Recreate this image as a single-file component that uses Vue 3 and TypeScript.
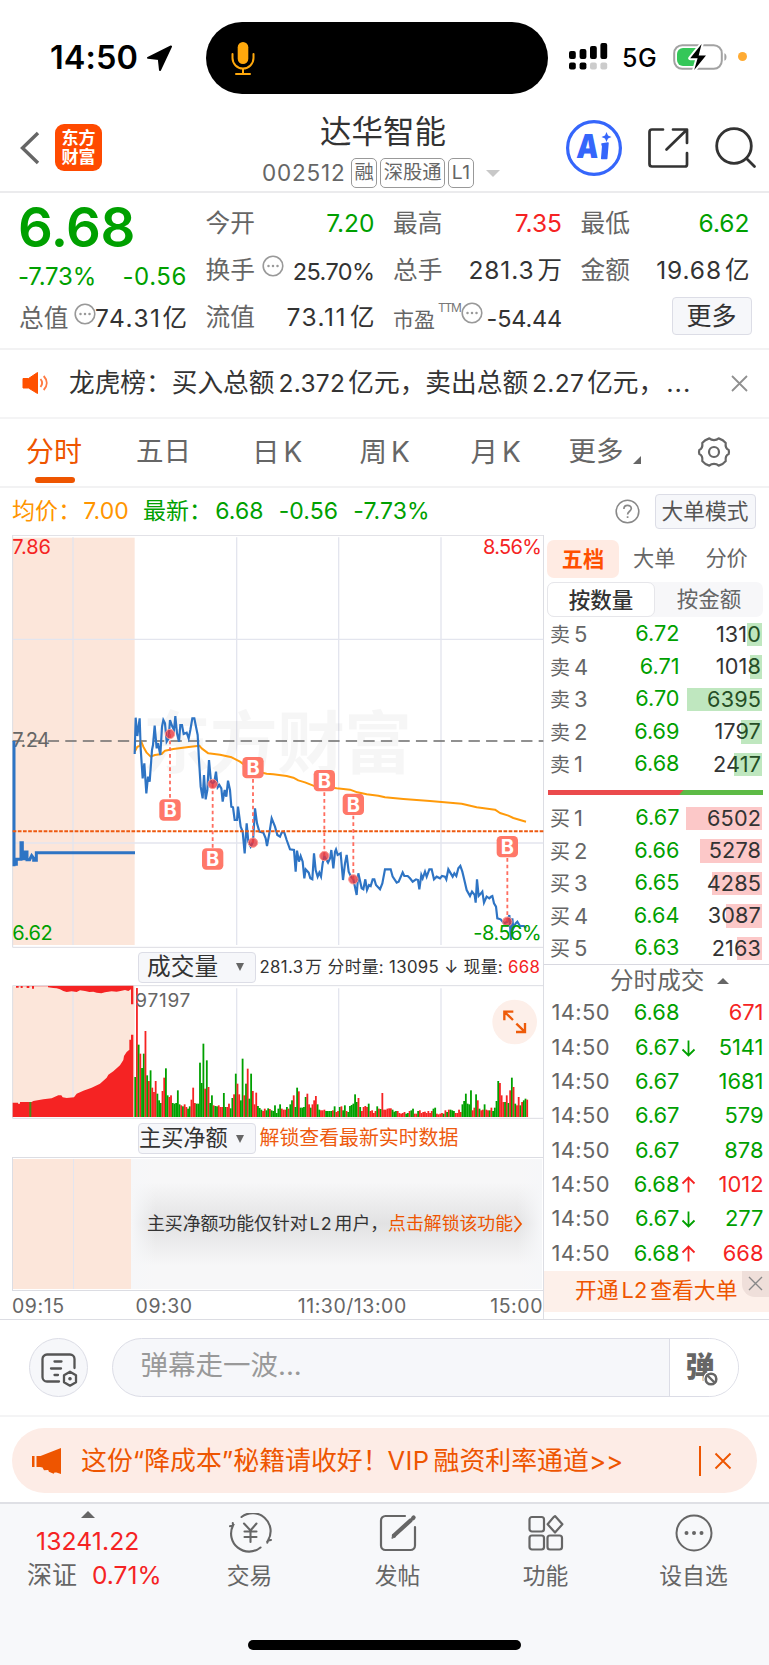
<script setup lang="ts">
interface Level { label: string; n: number; price: string; vol: number; width: number }
interface Trade { price: string; dir: '' | 'up' | 'down'; vol: number; tone: 'red' | 'green' }
interface Marker { x: number; dot: number; box: number }

const sells: Level[] = [
  { label: '卖', n: 5, price: '6.72', vol: 1310, width: 15 },
  { label: '卖', n: 4, price: '6.71', vol: 1018, width: 12 },
  { label: '卖', n: 3, price: '6.70', vol: 6395, width: 75 },
  { label: '卖', n: 2, price: '6.69', vol: 1797, width: 21 },
  { label: '卖', n: 1, price: '6.68', vol: 2417, width: 28 },
]
const buys: Level[] = [
  { label: '买', n: 1, price: '6.67', vol: 6502, width: 76 },
  { label: '买', n: 2, price: '6.66', vol: 5278, width: 62 },
  { label: '买', n: 3, price: '6.65', vol: 4285, width: 50 },
  { label: '买', n: 4, price: '6.64', vol: 3087, width: 36 },
  { label: '买', n: 5, price: '6.63', vol: 2163, width: 25 },
]
const trades: Trade[] = [
  { price: '6.68', dir: '', vol: 671, tone: 'red' },
  { price: '6.67', dir: 'down', vol: 5141, tone: 'green' },
  { price: '6.67', dir: '', vol: 1681, tone: 'green' },
  { price: '6.67', dir: '', vol: 579, tone: 'green' },
  { price: '6.67', dir: '', vol: 878, tone: 'green' },
  { price: '6.68', dir: 'up', vol: 1012, tone: 'red' },
  { price: '6.67', dir: 'down', vol: 277, tone: 'green' },
  { price: '6.68', dir: 'up', vol: 668, tone: 'red' },
]
// Chart geometry is kept at three units per CSS pixel.
const markers: Marker[] = [
  { x: 510, dot: 612, box: 840 },
  { x: 638, dot: 762, box: 987 },
  { x: 759, dot: 938, box: 713 },
  { x: 973, dot: 978, box: 752 },
  { x: 1060, dot: 1048, box: 823 },
  { x: 1522, dot: 1175, box: 950 },
]
const morning = '404,672 407,563 412,618 419,565 422,655 428,745 433,700 439,790 444,740 449,755 456,660 459,645 464,587 470,655 474,640 481,675 486,590 490,570 495,580 500,635 506,625 510,570 517,590 522,600 526,558 531,610 537,635 541,585 546,585 551,612 560,608 566,625 571,600 577,565 583,565 588,590 593,615 597,690 602,770 608,805 612,735 617,808 622,780 627,690 633,755 638,760 643,755 648,725 653,772 658,765 664,775 668,815 674,780 679,800 684,752 690,780 694,830 699,832 704,870 711,870 714,830 722,890 728,905 734,970 740,880 745,935 752,950 759,935 765,835 771,880 778,905 790,908 797,925 801,948 808,910'
const later: number[][] = [[5,865],[15,890],[22,915],[30,920],[35,908],[42,905],[50,930],[60,958],[72,960],[77,1025],[81,962],[87,995],[92,978],[98,995],[103,1045],[107,1018],[116,1028],[121,1045],[127,1048],[132,970],[137,1020],[143,1040],[148,1028],[153,1040],[158,1000],[163,978],[174,998],[180,985],[184,960],[190,1015],[195,965],[198,958],[203,975],[212,970],[219,1050],[225,1000],[230,975],[236,1025],[243,1040],[250,1048],[260,1095],[265,1030],[275,1075],[280,1078],[286,1048],[291,1080],[297,1065],[302,1068],[308,1048],[313,1048],[318,1065],[330,1078],[337,1060],[345,1018],[362,1018],[368,1040],[380,1058],[386,1055],[398,1027],[403,1038],[413,1038],[420,1045],[428,1055],[438,1048],[444,1050],[448,1078],[454,1035],[458,1045],[465,1025],[470,1040],[478,1018],[485,1018],[492,1048],[500,1040],[510,1045],[516,1038],[525,1040],[529,1048],[535,1018],[548,1040],[553,1030],[559,1038],[565,1015],[571,1008],[577,1025],[583,1050],[590,1080],[600,1098],[606,1085],[614,1095],[617,1118],[621,1048],[626,1098],[633,1090],[637,1085],[642,1118],[650,1100],[658,1105],[663,1100],[667,1098],[672,1120],[678,1130],[682,1165],[692,1168],[702,1180],[712,1175],[718,1155],[723,1230],[727,1165],[730,1195],[737,1180],[742,1175],[750,1188],[762,1188],[768,1195]]
const pricePoints = morning + ' ' + later.map(([x, y]) => `${x + 810},${y}`).join(' ')
const avgPoints = '404,665 412,650 419,648 423,633 430,650 440,668 452,680 465,675 485,672 495,662 520,657 560,652 598,647 605,655 625,670 660,674 695,682 720,695 740,710 760,722 800,731 820,733 860,738 880,743 895,751 915,757 940,767 970,770 1010,775 1050,779 1072,787 1100,793 1135,797 1155,802 1210,807 1290,813 1385,821 1430,832 1485,839 1500,849 1525,857 1540,864 1578,875'

const volumeCodes = 'g120 r387 g217 r190 g147 g190 r258 g125 r108 g140 r88 r75 r108 g70 g50 g42 r78 r118 g146 g65 r60 r65 g42 g40 g42 g80 g38 r35 g32 r38 r30 g25 g32 r52 r88 r42 g40 g40 g163 g102 g220 r85 g170 r90 g42 g65 r35 g33 g32 r35 r30 r30 g72 g30 r30 r40 g26 g57 r68 g130 r100 r68 g50 g175 r65 g100 r145 g55 g130 r78 r38 r73 g33 g27 g22 r18 r25 g20 g26 r24 g20 g18 g35 g12 g25 g38 r25 r22 r22 g30 r25 g38 g50 r65 g30 g88 r77 g28 g28 g30 g60 r70 r38 g28 r38 r50 r63 g38 g22 r20 r20 r22 g18 g18 g18 g18 r20 g32 r15 r18 g30 r32 g20 g35 r18 g15 g33 g36 g40 g68 g45 r57 g30 r18 r30 r33 r30 g40 r18 r20 r12 r18 g32 r25 g24 r72 r22 r22 r25 r26 r26 g22 g16 g18 r18 r12 r10 r12 r15 g10 g12 r18 g20 g25 r10 r10 g18 r20 r12 r15 r16 r12 r18 r12 r18 g25 g28 r10 r8 r10 r12 g10 r20 g15 r22 g22 g20 g18 r12 r12 r22 r15 g38 g48 g70 g40 g38 g80 r20 r28 g68 r50 g25 r20 r22 g38 r22 r20 g20 r28 g18 g28 g48 g108 r102 r65 r45 g45 r65 g42 r80 g118 r90 g40 r35 r60 g35 r45 g50 g55 r52'
const codes = volumeCodes.split(' ')
const step = (1584 - 403) / codes.length
const volumeBars = codes.map((c, i) => ({ x: 403 + i * step, h: Number(c.slice(1)), fill: c[0] === 'r' ? '#f52323' : '#00a000' }))
const auctionTop = '38,138 48,138 48,143 56,143 56,139 62,139 62,144 68,144 68,139 80,139 80,144 88,144 88,139 96,139 96,146 102,146 102,139 144,139 144,142 160,144 170,145 180,148 190,153 200,156 215,154 230,156 240,151 255,153 268,156 280,155 290,158 304,160 315,157 335,154 350,155 365,152 375,150 385,153 393,148 393,193 400,193 400,137'
const auctionBottom = '38,531 38,488 54,488 54,491 60,491 60,486 95,486 100,483 130,478 155,475 165,470 175,466 184,466 188,472 200,474 222,472 230,461 250,452 275,443 300,431 320,413 325,404 340,394 360,376 370,360 372,348 380,336 388,329 388,299 393,299 393,284 400,284 400,531'
const tabs = ['五日', '日K', '周K', '月K']
</script>

<template>
  <main class="phone">
    <section class="status">
      <span class="clock">14:50</span>
      <svg class="loc" width="26" height="26" viewBox="0 0 26 26"><path d="M24 1.5 13 25 11.8 14 1 12.8Z" fill="#000" stroke="#000" stroke-width="2" stroke-linejoin="round" /></svg>
      <div class="island">
        <svg width="24" height="35" viewBox="0 0 24 35"><rect x="6.7" y="1" width="10.6" height="22" rx="5.3" fill="#ffa80c" /><path d="M1.5 13v4a10.5 10.5 0 0 0 21 0v-4M12 28v5M5 33h14" fill="none" stroke="#ffa80c" stroke-width="2" stroke-linecap="round" /></svg>
      </div>
      <svg class="signal" width="40" height="28" viewBox="0 0 40 28">
        <rect x="0" y="8" width="6.8" height="8" rx="2" /><rect x="10.6" y="6" width="6.8" height="10" rx="2" /><rect x="21" y="3" width="6.8" height="13" rx="2" /><rect x="31.4" y="0" width="6.8" height="16" rx="2" />
        <rect x="0" y="19.4" width="6.8" height="7" rx="2" /><rect x="10.6" y="19.4" width="6.8" height="7" rx="2" /><rect x="21" y="19.4" width="6.8" height="7" rx="2" fill="#ccc" /><rect x="31.4" y="19.4" width="6.8" height="7" rx="2" fill="#ccc" />
      </svg>
      <span class="net">5G</span>
      <svg class="battery" width="56" height="28" viewBox="0 0 56 28">
        <rect x="1.2" y="2.2" width="47.6" height="23.6" rx="8" fill="#fff" stroke="#a2a2a2" stroke-width="2" />
        <path d="M10 5h17v18H10a6 6 0 0 1-6-6v-6a6 6 0 0 1 6-6Z" fill="#35c759" />
        <path d="M51.4 10.2v7.6c2.8-1 2.8-6.6 0-7.6Z" fill="#a2a2a2" />
        <path d="M28.6 1 17.2 15.2h7.4L21.2 27 33 12.4h-7.3Z" fill="#000" stroke="#fff" stroke-width="4" paint-order="stroke" stroke-linejoin="round" />
      </svg>
      <i class="privacy"></i>
    </section>

    <header class="head">
      <svg class="back" width="22" height="36" viewBox="0 0 22 36"><path d="M19 3 3.5 18 19 33" fill="none" stroke="#666" stroke-width="3.4" /></svg>
      <div class="logo"><span>东方</span><span>财富</span></div>
      <div class="title">
        <h1>达华智能</h1>
        <p><span class="code">002512</span><b>融</b><b>深股通</b><b>L1</b><i></i></p>
      </div>
      <svg class="ai" width="58" height="58" viewBox="0 0 58 58">
        <circle cx="29" cy="29" r="26.4" fill="#fff" stroke="#3566fb" stroke-width="3.2" />
        <text transform="translate(11 39) skewX(-4)" textLength="22" lengthAdjust="spacingAndGlyphs" class="ai-letter">A</text><path d="m37 25 6-1-1.300 15.500h-5l1-12Z" fill="#3566fb" stroke="#3566fb" stroke-width="1.500" stroke-linejoin="round" />
        <path d="m41.500 13 1.500 3.500 3.500 1.500-3.500 1.500-1.500 3.500-1.500-3.500-3.500-1.500 3.500-1.500Z" fill="#3566fb" />
      </svg>
      <svg class="share" width="42" height="42" viewBox="0 0 42 42" fill="none" stroke="#333" stroke-width="2.7"><path d="M16 2.500H5A2.500 2.500 0 0 0 2.500 5v32A2.500 2.500 0 0 0 5 39.500h33a2 2 0 0 0 2-2V26M26 2.500h14v13.500M39.500 3 19.500 22.500" stroke-linejoin="round" stroke-linecap="round" /></svg>
      <svg class="search" width="42" height="42" viewBox="0 0 42 42" fill="none" stroke="#333" stroke-width="2.8"><circle cx="19" cy="19" r="17.3" /><path d="m31.5 31.5 8 8" stroke-linecap="round" /></svg>
    </header>

    <section class="quote">
      <div class="col first">
        <strong class="green">6.68</strong>
        <div class="row chg green"><span>-7.73%</span><span>-0.56</span></div>
        <div class="row cap"><label>总值</label><svg class="dots" viewBox="0 0 22 22"><circle cx="11" cy="11" r="9.8" /><path d="M6.5 11h.01M11 11h.01M15.5 11h.01" /></svg><span class="wide">74.31<em>亿</em></span></div>
      </div>
      <div class="col">
        <div class="row"><label>今开</label><span class="green">7.20</span></div>
        <div class="row"><label>换手</label><svg class="dots near" viewBox="0 0 22 22"><circle cx="11" cy="11" r="9.8" /><path d="M6.5 11h.01M11 11h.01M15.5 11h.01" /></svg><span class="tight">25.70%</span></div>
        <div class="row"><label>流值</label><span class="wide">73.11<em>亿</em></span></div>
      </div>
      <div class="col">
        <div class="row"><label>最高</label><span class="red">7.35</span></div>
        <div class="row"><label>总手</label><span class="mid">281.3<em>万</em></span></div>
        <div class="row pe"><label>市盈</label><sup>TTM</sup><svg class="dots" viewBox="0 0 22 22"><circle cx="11" cy="11" r="9.8" /><path d="M6.5 11h.01M11 11h.01M15.5 11h.01" /></svg><span class="tight loss">-54.44</span></div>
      </div>
      <div class="col last">
        <div class="row"><label>最低</label><span class="green">6.62</span></div>
        <div class="row"><label>金额</label><span class="mid">19.68<em>亿</em></span></div>
        <button class="more">更多</button>
      </div>
    </section>

    <section class="news">
      <svg width="27" height="24" viewBox="0 0 27 24"><path d="M1 7.5h5.5L15.500 1.500v21L6.500 17H1Z" fill="#ff5100" stroke="#ff5100" stroke-linejoin="round" /><path d="M18.500 8c2 2.400 2 5.600 0 8M21.700 5c4 4.300 4 9.700 0 14" fill="none" stroke="#ff7a42" stroke-width="1.900" /></svg>
      <p>龙虎榜：买入总额<span>2.372</span>亿元，卖出总额<span>2.27</span>亿元，<u>...</u></p>
      <svg class="x" width="17" height="17" viewBox="0 0 17 17"><path d="m1 1 15 15M16 1 1 16" fill="none" stroke="#909090" stroke-width="1.800" /></svg>
    </section>

    <nav class="tabs">
      <span class="on">分时</span>
      <span v-for="t in tabs" :key="t" :class="{ k: t.endsWith('K') }">{{ t.slice(0, 1) }}<s>{{ t.slice(1) }}</s></span>
      <span class="menu">更多<i></i></span>
      <svg width="34" height="34" viewBox="0 0 34 34" fill="none" stroke="#666" stroke-width="2.200"><path d="M12.300 3.400c1 .9 2.700 1.700 4.700 1.700s3.700-.8 4.700-1.700c3 .9 5.300 2.300 7 4.500-.5 4 .8 6.200 3 7.100.4 1.400.4 2.600 0 4-2.200.9-3.500 3.100-3 7.100-1.700 2.200-4 3.600-7 4.500-1-.9-2.700-1.700-4.700-1.700s-3.700.8-4.700 1.700c-3-.9-5.300-2.300-7-4.500.5-4-.8-6.200-3-7.100-.4-1.400-.4-2.600 0-4 2.200-.9 3.500-3.100 3-7.100 1.700-2.200 4-3.600 7-4.500Z" stroke-linejoin="round" /><circle cx="17" cy="17" r="5" /></svg>
    </nav>

    <section class="info">
      <p><span class="avg">均价：</span><span class="avg v1">7.00</span><span>最新：</span><span class="v2">6.68</span><span class="v3">-0.56</span><span>-7.73%</span></p>
      <svg width="25" height="25" viewBox="0 0 25 25"><circle cx="12.500" cy="12.500" r="11.300" fill="none" stroke="#888" stroke-width="1.600" /><path d="M8.900 9.900c0-4.800 7.400-4.600 7.400-.3 0 2.500-3.700 2.900-3.700 5.900M12.600 17.200v1.800" fill="none" stroke="#888" stroke-width="1.700" /></svg>
      <button>大单模式</button>
    </section>

    <section class="board">
      <div class="charts">
        <svg class="price" width="532" height="413" viewBox="36 15 1596 1239">
          <rect x="38" y="23" width="366" height="1222" fill="#fce6da" />
          <path d="M38 16H1632M38 1252H1632" stroke="#dcdde3" stroke-width="3" />
          <path d="M38 15V1252" stroke="#dcdde3" stroke-width="3" />
          <path d="M219 22V1245M710 22V1245M1016 22V1245M1323 22V1245M38 328H1630M38 939H1630" stroke="#e3e5ee" stroke-width="4" />
          <text class="mark" x="428" y="713" textLength="808">东方财富</text>
          <path d="M38 633H1630" stroke="#6c6c6c" stroke-width="4" stroke-dasharray="34 18.600" />
          <text x="37" y="73" fill="#f52323" textLength="116">7.86</text>
          <text x="1449" y="73" fill="#f52323" textLength="177">8.56%</text>
          <text x="37" y="651" fill="#666" textLength="113">7.24</text>
          <text x="37" y="1230" fill="#00a000" textLength="121">6.62</text>
          <path d="M42 633V1009M42 1003h7V988h14V938h4v48h9V966h5v23h8l6-12 6 8v6h8V968H405" fill="none" stroke="#2e74c4" stroke-width="9" />
          <polyline :points="avgPoints" fill="none" stroke="#ff9a0a" stroke-width="6" stroke-linejoin="round" />
          <polyline :points="pricePoints" fill="none" stroke="#2e74c4" stroke-width="6.500" stroke-linejoin="miter" />
          <path d="M38 904H1630" stroke="#ed5a10" stroke-width="6" stroke-dasharray="11 4.500" />
          <g v-for="m in markers" :key="m.x">
            <line :x1="m.x" :x2="m.x" :y1="m.dot" :y2="m.box" stroke="#ff6e60" stroke-width="5.500" stroke-dasharray="11 9" />
            <circle :cx="m.x" :cy="m.dot" r="14" fill="#e4353d" fill-opacity=".78" stroke="#ff9a90" stroke-width="3" />
            <rect :x="m.x - 32" :y="m.box - 32" width="64" height="64" rx="13" fill="#ff7869" />
            <text class="b" :x="m.x" :y="m.box + 22" text-anchor="middle">B</text>
          </g>
          <text x="1420" y="1230" fill="#00a000" textLength="205">-8.56%</text>
        </svg>

        <div class="subhead">
          <button>成交量<i></i></button>
          <p>281.3<em>万</em> 分时量: 13095 ↓ 现量: <span class="red">668</span></p>
        </div>
        <svg class="volume" width="532" height="134" viewBox="36 135 1596 402">
          <rect x="38" y="139" width="366" height="392" fill="#fce6da" />
          <path d="M38 137H1632M38 535H1632M38 137V535" fill="none" stroke="#dcdde3" stroke-width="3" />
          <path d="M219 145V531M710 145V531M1016 145V531M1323 145V531" stroke="#e3e5ee" stroke-width="4" />
          <polygon :points="auctionTop" fill="#f52323" />
          <polygon :points="auctionBottom" fill="#f52323" />
          <rect x="88" y="486" width="6" height="45" fill="#4b8b1c" />
          <rect v-for="(b, i) in volumeBars" :key="i" :x="b.x" :y="531 - b.h" :width="step + .3" :height="b.h" :fill="b.fill" />
          <text x="406" y="200" fill="#666" textLength="165">97197</text>
          <circle cx="1544" cy="246" r="67" fill="#fdefe9" />
          <path d="M1513 241V215h27M1514 216l25 24M1575 249v27h-27M1574 275l-25-24" fill="none" stroke="#ee5b0a" stroke-width="7" />
        </svg>
        <div class="subhead second">
          <button>主买净额<i></i></button>
          <p>解锁查看最新实时数据</p>
        </div>
        <div class="locked">
          <div class="auction"></div>
          <div class="veil"><span>主买净额功能仅针对<q>L2</q>用户，</span><a>点击解锁该功能</a><svg width="10" height="18" viewBox="0 0 10 18"><path d="m1.500 1 6.500 8-6.500 8" fill="none" stroke="#ee5500" stroke-width="1.800" /></svg></div>
        </div>
        <div class="axis"><span>09:15</span><span>09:30</span><span>11:30/13:00</span><span>15:00</span></div>
      </div>

      <aside class="side">
        <div class="modes"><b>五档</b><span>大单</span><span>分价</span></div>
        <div class="segment"><b>按数量</b><span>按金额</span></div>
        <div class="levels sell">
          <div v-for="l in sells" :key="l.n"><label>{{ l.label }}<s>{{ l.n }}</s></label><span class="green">{{ l.price }}</span><em><i :style="{ width: l.width + 'px' }"></i>{{ l.vol }}</em></div>
        </div>
        <svg class="ratio" width="215" height="5" viewBox="0 0 215 5"><path d="M0 0h215v5H0Z" fill="#5dbb46" /><path d="M0 0h135.500l-4.500 5H0Z" fill="#eb4a4c" /></svg>
        <div class="levels buy">
          <div v-for="l in buys" :key="l.n"><label>{{ l.label }}<s>{{ l.n }}</s></label><span class="green">{{ l.price }}</span><em><i :style="{ width: l.width + 'px' }"></i><span>{{ l.vol }}</span></em></div>
        </div>
        <div class="deals-title">分时成交<i></i></div>
        <div class="deals">
          <div v-for="(t, i) in trades" :key="i">
            <label>14:50</label><span class="green">{{ t.price }}</span>
            <svg width="15" height="18" viewBox="0 0 15 18" :class="t.dir"><path v-if="t.dir" d="M7.500 1.500v15M1.500 10.500l6 6 6-6" fill="none" stroke="currentColor" stroke-width="1.800" /></svg>
            <em :class="t.tone">{{ t.vol }}</em>
          </div>
        </div>
        <div class="promo"><span>开通<q>L2</q>查看大单</span><div class="corner"><svg width="15" height="15" viewBox="0 0 15 15"><path d="m1 1 13 13M14 1 1 14" stroke="#888" stroke-width="1.400" /></svg></div></div>
      </aside>
    </section>

    <section class="chat">
      <div class="round"><svg width="40" height="40" viewBox="0 0 40 40" fill="none" stroke="#555" stroke-width="2.300" stroke-linecap="round"><path d="M20 33.500H8a4.500 4.500 0 0 1-4.500-4.500V11A4.500 4.500 0 0 1 8 6.500h23a4.500 4.500 0 0 1 4.500 4.500v9M15.500 13.500h7M12 20.500h10M15.500 27h3.500" /><path d="m31 23.700 6 3.500v7L31 37.700l-6-3.500v-7Z" stroke-linejoin="round" /><circle cx="31" cy="30.700" r="1.200" fill="#555" stroke-width="1.200" /></svg></div>
      <div class="field"><span>弹幕走一波...</span><div class="danmu"><b>弹</b><svg width="16" height="16" viewBox="0 0 16 16"><circle cx="8" cy="8" r="5.300" fill="#fff" stroke="#fff" stroke-width="5" /><circle cx="8" cy="8" r="5.300" fill="none" stroke="#666" stroke-width="2.600" /><path d="m4.500 4.500 7 7" stroke="#666" stroke-width="2.400" /></svg></div></div>
    </section>

    <section class="vip">
      <div>
        <svg class="horn" width="31" height="28" viewBox="0 0 31 28"><path d="M1 9h2.500v11H1ZM5.500 9h4L30 1v26l-4.500-1.600-2 .1-.8 1.300-4.800-2-.7-1.800-4.200.3-1.500-2.800L9 20H5.500Z" fill="#ee5500" /></svg>
        <p>这份<q>“</q>降成本<q>”</q>秘籍请收好！<span>VIP</span>融资利率通道<u>&gt;&gt;</u></p>
        <i></i>
        <svg class="close" width="18" height="18" viewBox="0 0 18 18"><path d="m1.500 1.500 15 15M16.500 1.500l-15 15" stroke="#ee5500" stroke-width="1.900" /></svg>
      </div>
    </section>

    <footer class="bottom">
      <div class="index"><i></i><span>13241.22</span><p>深证<b>0.71%</b></p></div>
      <div class="act"><svg width="46" height="40" viewBox="0 0 46 40" fill="none" stroke="#666" stroke-width="2.100" stroke-linecap="round"><path d="M14.500 4A18 18 0 0 1 41 27.500l3-.5M41 27.500l-.7 2.200M33.500 34.500A18 18 0 0 1 6 12.500l-3 .8M6 12.500l-.2-2.500M17 10.500l6.500 7 6-7M23.500 17.500V29M17.500 18.500h12M17.500 24h12" /></svg><span>交易</span></div>
      <div class="act"><svg width="40" height="40" viewBox="0 0 40 40" fill="none" stroke="#666" stroke-width="2.200" stroke-linecap="round"><path d="M27 3H7.500A4.500 4.500 0 0 0 3 7.500v25A4.500 4.500 0 0 0 7.500 37h25a4.500 4.500 0 0 0 4.500-4.500V14" /><path d="M16 22.500 32.500 7.500" stroke-width="4.200" /><path d="m14 25 1-4 2.500 2.500Z" fill="#666" stroke-width="1" /><path d="m35 5.200.6-.6" stroke-width="4.200" /></svg><span>发帖</span></div>
      <div class="act"><svg width="40" height="40" viewBox="0 0 40 40" fill="none" stroke="#666" stroke-width="2.200"><rect x="3.500" y="4" width="14.500" height="14.500" rx="2.500" /><rect x="3.500" y="22.500" width="14.500" height="14" rx="2.500" /><rect x="21.500" y="22.500" width="14.500" height="14" rx="2.500" /><path d="m27.600 4.100 1.400-1 7.400 8.200-7.400 8.200-7.400-8.200Z" stroke-linejoin="round" /></svg><span>功能</span></div>
      <div class="act wide"><svg width="40" height="40" viewBox="0 0 40 40" fill="none" stroke="#666" stroke-width="2"><circle cx="20" cy="20" r="17.500" /><path d="M12.500 20h.01M20 20h.01M27.500 20h.01" stroke-width="4" stroke-linecap="round" /></svg><span>设自选</span></div>
      <div class="home"></div>
    </footer>
  </main>
</template>

<style>
html, body { background: #fff; }
</style>

<style scoped>
* { box-sizing: border-box; margin: 0; padding: 0; }
.phone { width: 769px; height: 1665px; overflow: hidden; font-family: Inter, "Noto Sans CJK SC", sans-serif; line-height: 1; color: #333; white-space: nowrap; font-feature-settings: "calt" 0; }
em, i { font-style: normal; }
s, u { text-decoration: none; }
q { quotes: none; }
q::before, q::after { content: none; }
button { font: inherit; color: inherit; }
svg { display: block; flex: none; }
.green { color: #00a000; }
.red { color: #f52323; }

.status { height: 100px; display: flex; align-items: center; padding: 16px 0 0 50px; color: #000; }
.clock { width: 97px; font-size: 32.500px; font-weight: 600; letter-spacing: .1px; }
.loc { margin: -1px 33px 0 0; }
.island { width: 342px; height: 72px; border-radius: 36px; background: #000; display: flex; align-items: center; padding-left: 25px; flex: none; }
.signal { margin: -2px 14px 0 21px; }
.net { font-size: 25px; font-weight: 500; width: 50px; letter-spacing: .5px; margin-left: -1px; padding-top: 1px; margin-right: 1px; }
.battery { margin-top: -2px; }
.privacy { width: 9px; height: 9px; border-radius: 50%; background: #ffab33; margin: -3px 0 0 9px; }

.head { height: 93px; border-bottom: 2px solid #ebebed; display: flex; align-items: flex-start; }
.back { margin: 30px 0 0 19px; }
.logo { margin: 24px 0 0 14px; width: 47px; height: 47px; border-radius: 9px; background: #ff4a00; color: #fff; font-size: 17px; font-weight: 700; display: flex; flex-direction: column; align-items: center; justify-content: center; gap: 2px; flex: none; }
.title { width: 440px; margin-left: 62px; flex: none; }
.title h1 { font-weight: 400; font-size: 31.500px; margin: 15px 0 0 156px; height: 36px; line-height: 34px; }
.title p { display: flex; align-items: center; height: 32px; margin: 6px 0 0 98px; color: #666; font-size: 19.300px; }
.code { font-size: 22.500px; width: 89px; letter-spacing: .8px; }
.title b { font-weight: 400; border: 1.500px solid #999; border-radius: 5px; height: 30px; line-height: 27px; padding: 0 2.500px; margin-right: 3px; }
.title b:last-of-type { letter-spacing: .6px; }
.title p i { border: 7px solid transparent; border-top-color: #c8c8c8; border-bottom: 0; margin-left: 9px; }
.ai { margin: 19px 0 0 -39px; }
.ai-letter { font: 900 33px Inter, sans-serif; fill: #3566fb; }
.share { margin: 27px 0 0 24px; }
.search { margin: 27px 0 0 26px; }

.quote { height: 157px; border-bottom: 2px solid #f2f2f3; display: flex; padding: 7px 0 0 19px; gap: 20px; }
.col { width: 168px; margin-right: -.5px; }
.col.first { width: 167px; }
.row { height: 47px; display: flex; align-items: center; font-size: 24.500px; }
.row > span { margin-left: auto; margin-right: -1px; letter-spacing: 0; }
.row label { color: #666; font-size: 24.700px; }
.row em { margin-left: 3px; font-size: 24.500px; letter-spacing: 0; }
.first strong { display: block; height: 54px; line-height: 54px; font-size: 54.500px; font-weight: 600; letter-spacing: -.5px; margin-left: -1px; }
.first .chg { height: 46px; font-size: 24px; justify-content: space-between; }
.chg > span:first-child { margin-left: -1px; letter-spacing: -.2px; }
.chg > span:last-child { letter-spacing: .6px; }
.first .cap { height: 36px; }
.row .wide { letter-spacing: 1.500px; }
.row .mid { letter-spacing: .9px; }
.cap em { margin-left: 1px; }
.row .tight { font-size: 23.500px; letter-spacing: -.6px; padding-top: 3px; }
.row .loss { letter-spacing: -.2px; }
.dots { width: 22px; height: 22px; margin: 0 -10px 9px 6px; fill: none; stroke: #999; stroke-width: 1.600; }
.dots path { stroke-width: 2.500; stroke-linecap: round; }
.near { margin-left: 7px; }
.pe label { font-size: 21px; padding-top: 4px; }
.pe sup { font-size: 12px; color: #777; margin: 0 -6px 20px 3px; letter-spacing: -1.200px; }
.more { margin: 3px 0 0 91px; width: 80px; height: 38px; border: 1.500px solid #dcdde6; border-radius: 4px; background: #f6f7fa; font-size: 25px; }

.news { height: 69px; border-bottom: 2px solid #f4f4f5; display: flex; align-items: center; padding: 1px 21px 2px 22px; font-size: 25.700px; }
.news p { margin-left: 20px; flex: 1; }
.news p span { margin: 0 3px 0 4px; font-size: 24.500px; letter-spacing: .3px; }
.news u { margin-left: 2px; letter-spacing: 1px; }

.tabs { height: 69px; border-bottom: 2px solid #f2f2f3; display: grid; grid-template-columns: 110px 116px 107.500px 111px 98px 128px 34px; align-items: center; color: #666; font-size: 27.500px; padding: 0 0 1px 26px; }
.tabs .on { color: #ee5500; font-size: 28px; position: relative; }
.tabs .on::after { content: ""; position: absolute; left: 9px; bottom: -17px; width: 40px; height: 6px; border-radius: 3px; background: #ee5500; }
.tabs .k s { margin-left: 4px; font-size: 28px; }
.menu i { display: inline-block; border-left: 8px solid transparent; border-bottom: 8px solid #666; margin: 0 0 -3px 9px; }

.info { height: 47px; display: flex; align-items: center; padding: 0 13.500px 0 12px; font-size: 23px; }
.info p { flex: 1; display: flex; align-items: center; color: #00a000; }
.info span { letter-spacing: .1px; }
.info .avg { color: #ff9500; }
.v1 { margin: 0 14px 0 2px; }
.v2 { margin: 0 15px 0 3px; }
.v3 { margin-right: 15px; }
.info button { width: 101px; height: 35px; border: 1.500px solid #dcdde6; border-radius: 4px; background: #f6f7fa; color: #555; font-size: 21.700px; margin-left: 15px; }

.board { height: 785px; display: flex; border-bottom: 1.500px solid #dcdde3; }
.charts { width: 544px; padding-left: 12px; border-right: 1.500px solid #dcdde3; flex: none; }
.price text { font-size: 60px; }
.price .b { font-size: 60px; font-weight: 700; fill: #fff; }
.price .mark { font-size: 204px; font-weight: 700; fill: #000; fill-opacity: .035; }
.volume text { font-size: 57px; }
.subhead { height: 37px; display: flex; align-items: center; padding: 1px 0 0 126px; }
.subhead button { width: 118px; height: 31px; border: 1.500px solid #dcdde6; border-radius: 4px; background: #f6f7fa; display: flex; align-items: center; justify-content: space-between; padding: 0 11px 0 8px; font-size: 23.700px; }
.subhead i { border: 4.500px solid transparent; border-top: 8px solid #666; border-bottom: 0; }
.subhead p { margin-left: 3.500px; font-size: 16.800px; letter-spacing: .33px; }
.subhead em { margin-left: 2px; }
.second { height: 38px; }
.second button { font-size: 22.200px; padding-left: 0; }
.second p { font-size: 19.900px; color: #ee5b10; letter-spacing: 0; }
.locked { height: 134px; border: solid #dcdde3; border-width: 1.500px 0 1.500px 1.500px; display: flex; padding: 1px 1px 1px 0; }
.auction { width: 118px; background: linear-gradient(90deg, transparent 60px, #e3e5ee 60px, #e3e5ee 61.500px, transparent 61.500px) #fce6da; }
.veil { flex: 1; display: flex; align-items: center; padding-left: 16px; font-size: 17.850px; background: linear-gradient(90deg, #f6f7f9 0, #f6f7f900 6%, #f6f7f900 94%, #f6f7f9), linear-gradient(#f7f7f8 18%, #e2e2e3 50%, #f7f7f8 82%); }
.veil q { letter-spacing: 1px; margin: 0 2px; }
.veil a { color: #ee5500; }
.axis { display: flex; height: 32px; align-items: center; font-size: 19.500px; color: #666; letter-spacing: .55px; }
.axis span:nth-child(2) { margin-left: 71px; }
.axis span:nth-child(3) { margin-left: 105px; }
.axis span:nth-child(4) { margin-left: auto; }

.side { width: 225px; padding-top: 5px; }
.modes { display: flex; align-items: center; height: 38px; margin-left: 3px; font-size: 21.200px; color: #666; }
.modes b { width: 72px; height: 38px; line-height: 38px; text-align: center; background: #ffebe3; border-radius: 7px; color: #ff4f00; }
.modes span { margin-left: 14px; }
.modes span:last-child { margin-left: 30px; }
.segment { display: flex; margin: 4px 0 1px 3px; width: 216px; height: 35px; background: #f7f7f9; border-radius: 7px; font-size: 21.500px; color: #666; text-align: center; line-height: 34px; }
.segment b { width: 108px; background: #fff; border: 1.500px solid #e6e6ea; border-radius: 7px; font-weight: 500; color: #333; }
.segment span { flex: 1; }
.levels { font-size: 21.700px; }
.levels > div { display: flex; align-items: center; height: 32.500px; padding: 0 7px 0 6px; }
.levels label { width: 48px; color: #666; font-size: 20px; }
.levels s { font-size: 22px; margin-left: 4px; }
.levels > div > span { width: 81.500px; text-align: right; }
.levels em { flex: 1; height: 23.500px; line-height: 23.500px; text-align: right; position: relative; padding-right: 1px; letter-spacing: .1px; }
.levels em i { position: absolute; right: 0; top: 0; height: 100%; background: rgba(0, 160, 0, .25); }
.levels em span { position: relative; }
.buy em i { background: rgba(245, 35, 35, .25); }
.ratio { margin: 9.500px 0 7px 4px; }
.deals-title { border-top: 1.500px solid #d8d8e0; height: 32px; margin-top: -.5px; padding-left: 66px; font-size: 23.600px; display: flex; align-items: center; color: #666; }
.deals-title i { border: 6px solid transparent; border-bottom-color: #666; border-top: 0; margin-left: 13px; }
.deals > div { display: flex; align-items: center; height: 34.350px; padding: 0 5.500px 0 7.500px; font-size: 21.900px; }
.deals label { width: 67px; color: #666; letter-spacing: .4px; }
.deals span { width: 61px; text-align: right; }
.deals em { flex: 1; text-align: right; }
.deals svg { color: #00a000; margin-left: 1px; }
.deals .up { color: #f52323; transform: scaleY(-1); }
.promo { height: 41px; background: #fdf0ea; display: flex; padding: 7px 0 0 31px; font-size: 21.800px; line-height: 24px; color: #ee5500; }
.promo q { margin: 0 3px; }
.corner { width: 27px; height: 26px; margin: -7px 0 0 auto; background: #efdfda; border-radius: 0 0 0 13px; display: flex; align-items: center; justify-content: center; }

.chat { height: 97px; border-bottom: 2px solid #f4f4f5; display: flex; align-items: center; padding: 0 0 0 29px; }
.round { width: 59px; height: 59px; border-radius: 50%; border: 1.500px solid #dcdde6; background: #f6f7fa; display: flex; align-items: center; justify-content: center; margin-right: 23.500px; }
.field { width: 627px; height: 59px; border: 1.500px solid #dcdde6; border-radius: 30px; background: #f6f7fa; display: flex; overflow: hidden; justify-content: space-between; }
.field span { color: #999; font-size: 27.500px; line-height: 52px; margin-left: 28px; }
.danmu { width: 69px; background: #fff; border-left: 1.500px solid #dcdde6; padding: 12px 0 0 16px; display: flex; }
.danmu b { font-size: 29px; font-weight: 900; color: #666; line-height: 34px; }
.danmu svg { margin: 20px 0 0 -12px; }

.vip { height: 87px; border-bottom: 2px solid #dfe0e5; padding: 11px 12px 0; }
.vip > div { width: 745px; height: 65px; border-radius: 33px; background: #fdece6; color: #ee5500; font-size: 25.900px; display: flex; align-items: center; }
.horn { margin: 0 19px 0 19px; }
.vip p { width: 618px; }
.vip p span { font-size: 25.500px; margin: 0 4px 0 -1px; letter-spacing: .4px; }
.vip i { width: 1.500px; height: 30px; background: #ee5500; }
.close { margin-left: 13.500px; }

.bottom { height: 162px; background: #f7f8fa; display: flex; flex-wrap: wrap; align-content: flex-start; color: #666; }
.index { width: 175.500px; height: 100px; display: flex; flex-direction: column; align-items: center; padding-top: 7px; color: #f52323; font-size: 24.700px; }
.index i { border: 7px solid transparent; border-bottom-color: #666; border-top: 0; }
.index span { margin-top: 11px; letter-spacing: .1px; }
.index p { color: #666; margin: 9px 0 0 13px; display: flex; align-items: center; font-size: 25px; }
.index b { font-weight: 400; color: #f52323; margin-left: 15px; letter-spacing: 0; font-size: 24.500px; }
.act { width: 148px; height: 100px; display: flex; flex-direction: column; align-items: center; padding-top: 9px; font-size: 22.800px; gap: 12px; }
.home { width: 273px; height: 10px; border-radius: 5px; background: #000; margin: 36px 0 0 248px; }
</style>
